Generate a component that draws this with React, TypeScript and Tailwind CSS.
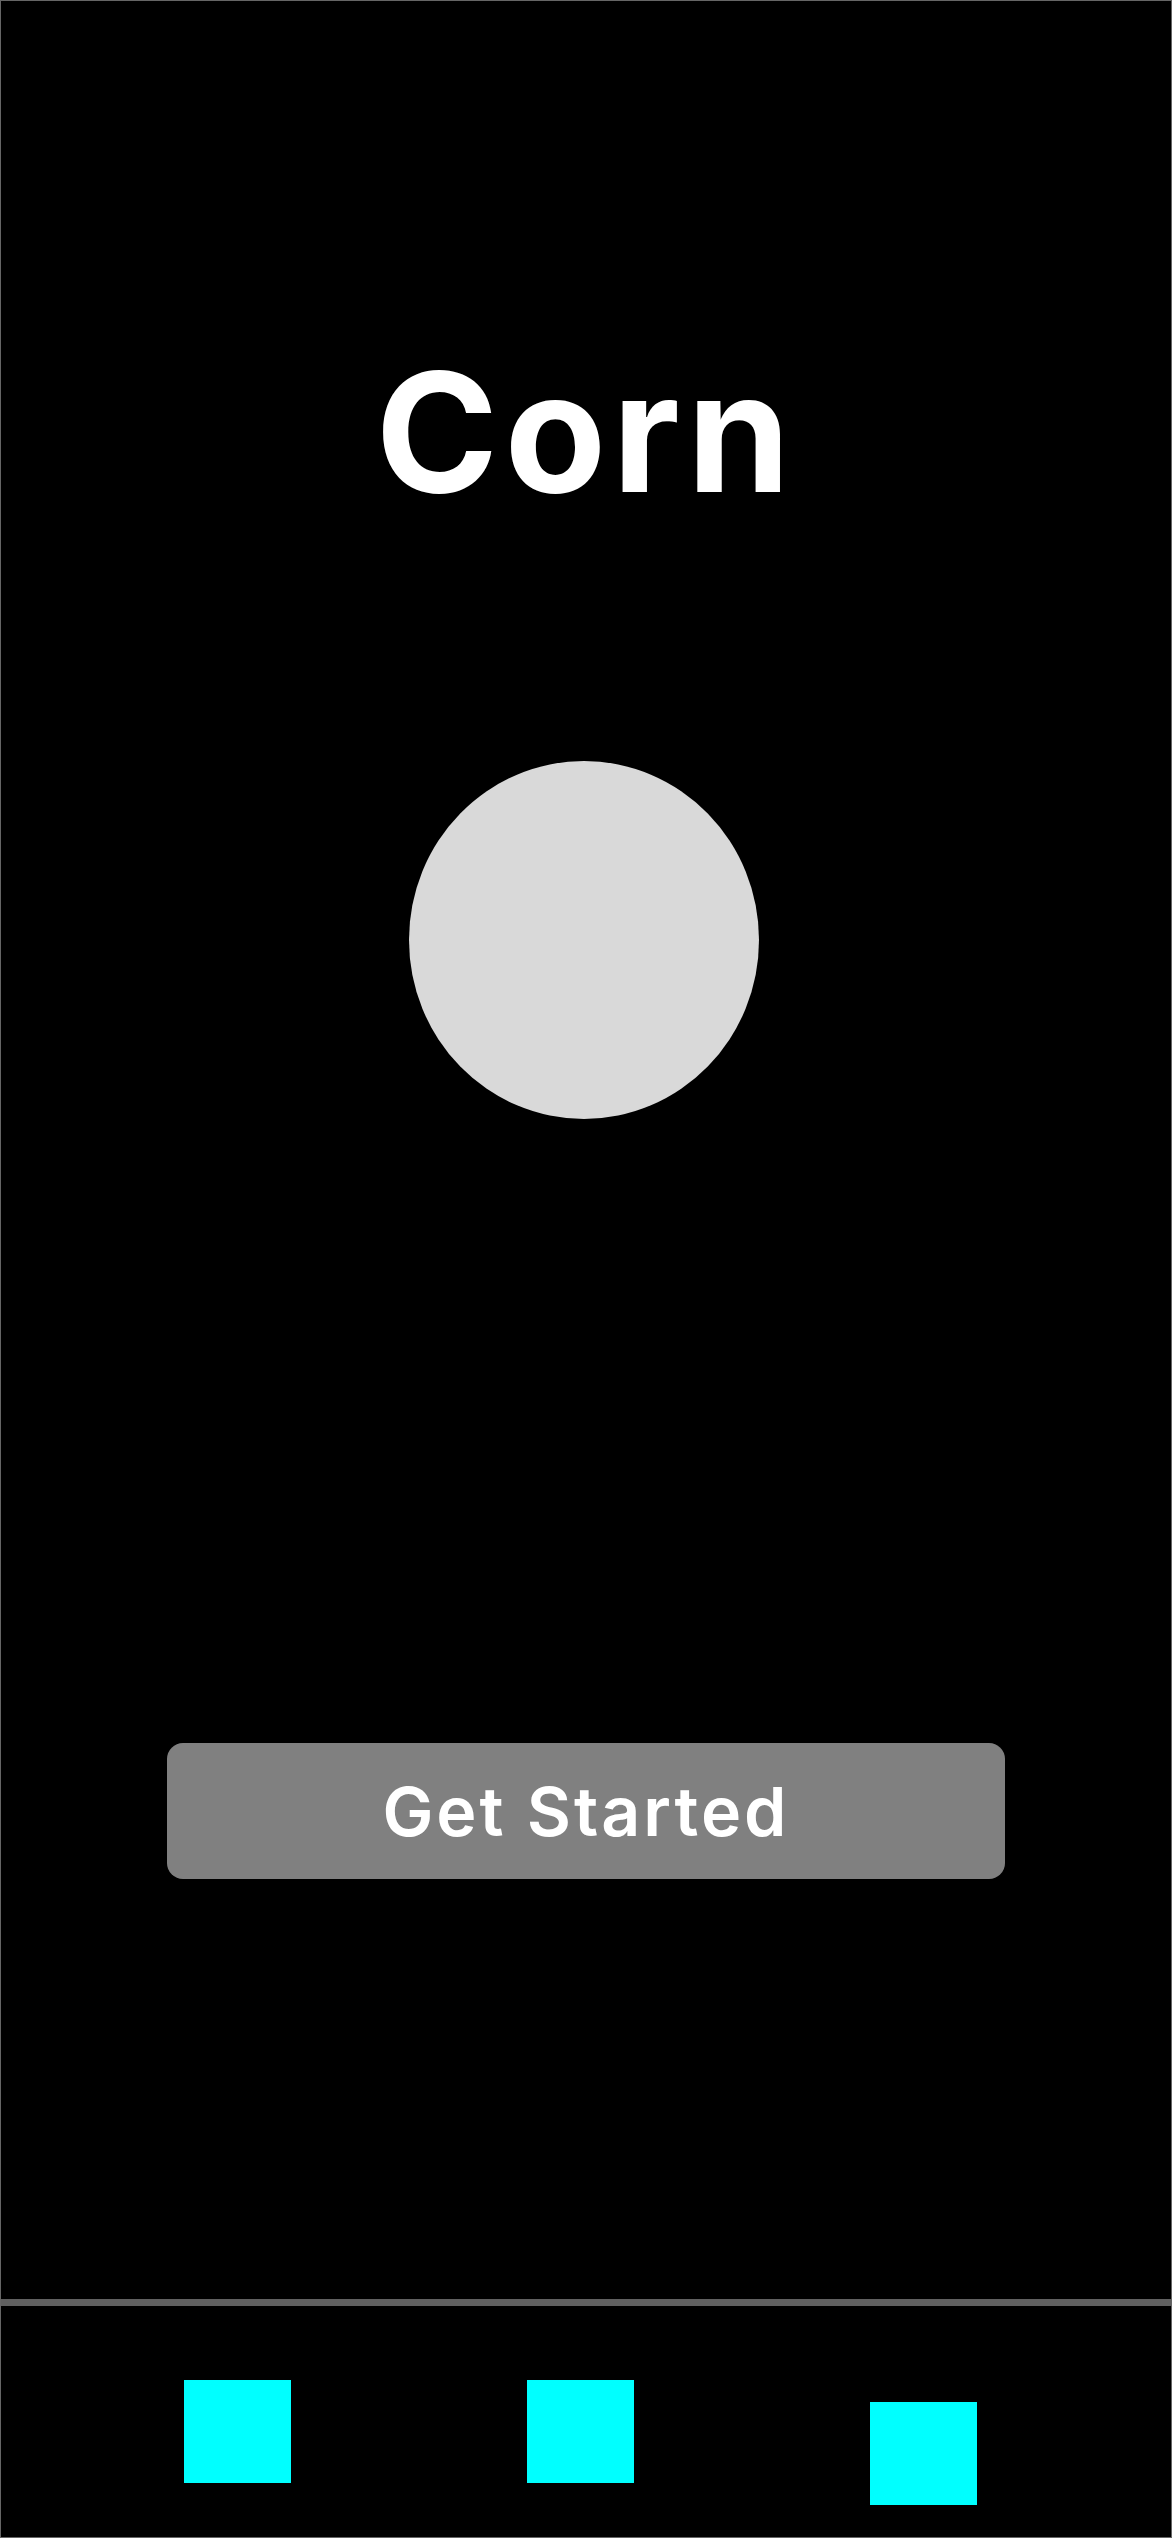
import React from "react";

export default function App() {
  return (
    <div
      className="w-[1172px] h-[2538px] bg-black border border-[#666666] flex flex-col overflow-hidden"
      style={{ fontFamily: "Inter, 'Noto Sans', sans-serif" }}
    >
      <main className="h-[2298px] flex flex-col">
        <h1 className="mt-[348px] text-center text-white font-bold text-[166px] leading-none tracking-[6px]">
          Corn
        </h1>
        <div className="mt-[246px] ml-[408px] w-[350px] h-[358px] rounded-[50%] bg-[#d9d9d9]" />
        <button className="mt-[624px] mx-auto w-[838px] h-[136px] rounded-2xl bg-[#808080] text-white font-semibold text-[68px] leading-none tracking-[3px] flex items-center justify-center">
          Get Started
        </button>
      </main>
      <div className="h-[7px] bg-[#606060]" />
      <nav className="flex-1 flex items-start pt-[74px] pl-[183px] gap-[236px]">
        <div className="w-[107px] h-[103px] bg-[#00ffff]" />
        <div className="w-[107px] h-[103px] bg-[#00ffff]" />
        <div className="mt-[22px] w-[107px] h-[103px] bg-[#00ffff]" />
      </nav>
    </div>
  );
}
